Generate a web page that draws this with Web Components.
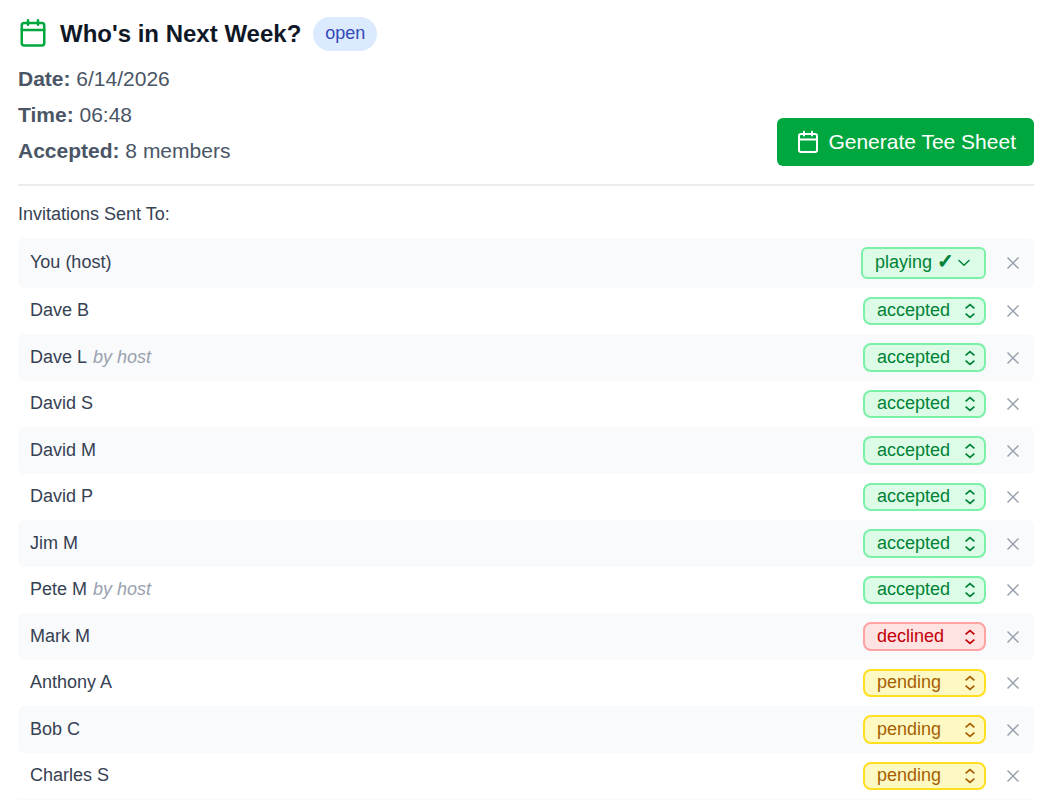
<!DOCTYPE html>
<html lang="en">
<head>
<meta charset="utf-8">
<meta name="viewport" content="width=device-width, initial-scale=1">
<title>Who's in Next Week?</title>
<style>
  body {
    margin: 0;
    background: #fff;
    color: #364153;
    font-family: "Liberation Sans", Arial, sans-serif;
    font-size: 18px;
    line-height: 28px;
  }
</style>
</head>
<body>
<tee-invite></tee-invite>
<script>
const invitations = [
  { name: 'Dave B', status: 'accepted' },
  { name: 'Dave L', status: 'accepted', by: 'by host' },
  { name: 'David S', status: 'accepted' },
  { name: 'David M', status: 'accepted' },
  { name: 'David P', status: 'accepted' },
  { name: 'Jim M', status: 'accepted' },
  { name: 'Pete M', status: 'accepted', by: 'by host' },
  { name: 'Mark M', status: 'declined' },
  { name: 'Anthony A', status: 'pending' },
  { name: 'Bob C', status: 'pending' },
  { name: 'Charles S', status: 'pending' }
]

class CalendarIcon extends HTMLElement {
  constructor() {
    super()
    this._shadowRoot = this.attachShadow({mode: 'open'})
  }
  connectedCallback() {
    this._shadowRoot.innerHTML = `
      <style>
        :host { display: block; flex: none; width: 24px; height: 24px; }
        svg { display: block; width: 100%; height: 100%; }
      </style>
      <svg viewBox="0 0 24 24" fill="none" stroke="currentColor" stroke-width="2" stroke-linecap="round" stroke-linejoin="round" aria-hidden="true">
        <path d="M8 1.8v3.6M16 1.8v3.6M3 9.6h18"/>
        <rect x="3" y="4" width="18" height="18" rx="2"/>
      </svg>
    `
  }
}
window.customElements.define('calendar-icon', CalendarIcon)

class StatusBadge extends HTMLElement {
  constructor() {
    super()
    this._shadowRoot = this.attachShadow({mode: 'open'})
  }
  connectedCallback() {
    this._shadowRoot.innerHTML = `
      <style>
        :host {
          display: block;
          padding: 2px 12px 4px;
          border-radius: 17px;
          background: #dbeafe;
          color: #3549b8;
        }
      </style>
      <slot></slot>
    `
  }
}
window.customElements.define('status-badge', StatusBadge)

class GenerateButton extends HTMLElement {
  constructor() {
    super()
    this._shadowRoot = this.attachShadow({mode: 'open'})
  }
  connectedCallback() {
    this._shadowRoot.innerHTML = `
      <style>
        :host { display: block; flex: none; }
        button {
          display: flex;
          align-items: center;
          gap: 8px;
          padding: 9px 18px 9px 19px;
          border: 0;
          border-radius: 6px;
          background: #00a63e;
          color: #fff;
          font: inherit;
          font-size: 21px;
          line-height: 30px;
          cursor: pointer;
        }
        button:hover { background: #008236; }
      </style>
      <button type="button"><calendar-icon></calendar-icon><slot></slot></button>
    `
  }
}
window.customElements.define('generate-button', GenerateButton)

// colours shared by the host's button and the members' drop-downs
const statusColors = `
  .playing, .accepted { background: #dcfce7; border-color: #7bf1a8; color: #008236; }
  .declined { background: #ffe2e2; border-color: #ffa2a2; color: #c10007; }
  .pending { background: #fef9c2; border-color: #ffdf20; color: #a65f00; }
`

class StatusSelect extends HTMLElement {
  constructor() {
    super()
    this._shadowRoot = this.attachShadow({mode: 'open'})
  }
  connectedCallback() {
    const status = this.getAttribute('value')
    const member = this.getAttribute('member')
    const options = ['accepted', 'declined', 'pending']
    this._shadowRoot.innerHTML = `
      <style>
        :host { display: block; }
        label { display: grid; align-items: center; position: relative; }
        select {
          appearance: none;
          box-sizing: border-box;
          width: 123px;
          height: var(--select-height, 28px);
          margin: 0;
          padding: 0 30px 2px 12px;
          border: 2px solid;
          border-radius: 8px;
          font: inherit;
          line-height: 20px;
          cursor: pointer;
        }
        ${statusColors}
        svg {
          position: absolute;
          right: 10px;
          width: 12px;
          height: 16px;
          pointer-events: none;
        }
        .arrow { background: none; }
      </style>
      <label>
        <select class="${status}" aria-label="Status of ${member}">
          ${options.map(o => `<option ${o === status ? 'selected' : ''}>${o}</option>`).join('')}
        </select>
        <svg class="arrow ${status}" viewBox="0 0 12 16" fill="none" stroke="currentColor" stroke-width="1.7" aria-hidden="true">
          <path d="M1.6 5.4 6 1.6 10.4 5.4M1.6 10.6 6 14.4 10.4 10.6"/>
        </svg>
      </label>
    `
    const select = this._shadowRoot.querySelector('select')
    select.addEventListener('change', () => {
      select.className = select.value
      this._shadowRoot.querySelector('svg').setAttribute('class', 'arrow ' + select.value)
    })
  }
}
window.customElements.define('status-select', StatusSelect)

class HostStatus extends HTMLElement {
  constructor() {
    super()
    this._shadowRoot = this.attachShadow({mode: 'open'})
  }
  connectedCallback() {
    this._shadowRoot.innerHTML = `
      <style>
        :host { display: block; }
        button {
          display: flex;
          align-items: center;
          gap: 4px;
          box-sizing: border-box;
          width: 125px;
          height: 32px;
          padding: 0 12px 2px;
          border: 2px solid;
          border-radius: 6px;
          font-family: "Liberation Sans", Arial, "DejaVu Sans", sans-serif;
          font-size: 18px;
          line-height: 26px;
          white-space: nowrap;
          cursor: pointer;
        }
        ${statusColors}
        svg { flex: none; width: 12px; height: 12px; }
        ::slotted(b) {
          font-size: 20px;
          line-height: 20px;
          -webkit-text-stroke: 1px currentColor;
        }
      </style>
      <button type="button" class="playing" aria-haspopup="menu">
        <span><slot></slot></span>
        <svg viewBox="0 0 12 12" fill="none" stroke="currentColor" stroke-width="1.5" stroke-linecap="round" stroke-linejoin="round" aria-hidden="true">
          <path d="M1 4.5 6 9.2 11 4.5"/>
        </svg>
      </button>
    `
  }
}
window.customElements.define('host-status', HostStatus)

class InviteRow extends HTMLElement {
  constructor() {
    super()
    this._shadowRoot = this.attachShadow({mode: 'open'})
  }
  connectedCallback() {
    const name = this.getAttribute('name')
    const by = this.getAttribute('by')
    this._shadowRoot.innerHTML = `
      <style>
        :host {
          display: flex;
          align-items: center;
          gap: 18px;
          padding: 9px 12px;
          border-radius: 6px;
        }
        .name { flex: 1; min-width: 0; padding-bottom: 2px; line-height: 26px; }
        em { margin-left: 6px; color: #99a1af; }
        .remove {
          display: flex;
          padding: 0;
          border: 0;
          background: none;
          color: #99a1af;
          cursor: pointer;
        }
        .remove:hover { color: #c10007; }
        svg { width: 18px; height: 18px; }
      </style>
      <div class="name">${name}${by ? `<em>${by}</em>` : ''}</div>
      <slot></slot>
      <button type="button" class="remove" aria-label="Remove ${name}">
        <svg viewBox="0 0 18 18" fill="none" stroke="currentColor" stroke-width="1.5" aria-hidden="true">
          <path d="M3.5 3.5 14.5 14.5M14.5 3.5 3.5 14.5"/>
        </svg>
      </button>
    `
    this._shadowRoot.querySelector('.remove')
    .addEventListener('click', () => {
      this.remove()
    })
  }
}
window.customElements.define('invite-row', InviteRow)

class TeeInvite extends HTMLElement {
  constructor() {
    super()
    this._shadowRoot = this.attachShadow({mode: 'open'})
  }
  connectedCallback() {
    this._shadowRoot.innerHTML = `
      <style>
        :host { display: block; padding: 17px 24px 0 18px; }
        header {
          display: flex;
          justify-content: space-between;
          align-items: flex-end;
          gap: 18px;
          padding-bottom: 18px;
          border-bottom: 2px solid #ebebeb;
        }
        .title { display: flex; align-items: center; gap: 12px; }
        .title calendar-icon { width: 30px; height: 30px; padding-bottom: 2px; color: #00a63e; }
        h1 { margin: 0; color: #101828; font-size: 24px; line-height: 34px; }
        .details {
          display: grid;
          gap: 6px;
          margin-top: 13px;
          color: #4a5565;
          font-size: 21px;
          line-height: 30px;
        }
        h2 { margin: 14px 0 10px; font-size: 18px; font-weight: normal; }
        .list { border-bottom: 1px solid #f9fafb; }
        invite-row:nth-child(odd) { --select-height: 29px; background: #f9fafb; }
      </style>
      <header>
        <div>
          <div class="title">
            <calendar-icon></calendar-icon>
            <h1>Who's in Next Week?</h1>
            <status-badge>open</status-badge>
          </div>
          <div class="details">
            <div><b>Date:</b> 6/14/2026</div>
            <div><b>Time:</b> 06:48</div>
            <div><b>Accepted:</b> 8 members</div>
          </div>
        </div>
        <generate-button>Generate Tee Sheet</generate-button>
      </header>
      <h2>Invitations Sent To:</h2>
      <div class="list">
        <invite-row name="You (host)"><host-status>playing <b>✓</b></host-status></invite-row>
        ${invitations.map(i => `
          <invite-row name="${i.name}" ${i.by ? `by="${i.by}"` : ''}>
            <status-select value="${i.status}" member="${i.name}"></status-select>
          </invite-row>
        `).join('')}
      </div>
    `
  }
}
window.customElements.define('tee-invite', TeeInvite)
</script>
</body>
</html>
